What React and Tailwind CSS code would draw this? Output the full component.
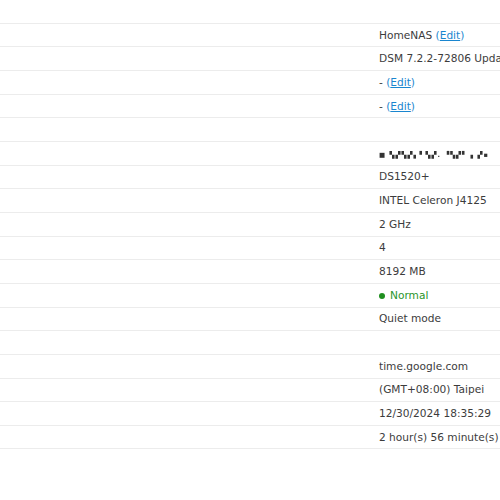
import React from 'react';

const Edit = () => (
  <span className="text-[#1a86cf]">(<span className="underline">Edit</span>)</span>
);

const rows = [
  null,
  <>HomeNAS <Edit /></>,
  'DSM 7.2.2-72806 Update 2',
  <>- <Edit /></>,
  <>- <Edit /></>,
  null,
  <span className="text-[6.5px] font-bold tracking-[1px] text-[#333] blur-[0.5px]">■ ▚▞▚▞▖▘▚▞. ▝▚▞▘▗ ▞▪</span>,
  'DS1520+',
  'INTEL Celeron J4125',
  '2 GHz',
  '4',
  '8192 MB',
  <span className="inline-flex items-center gap-[5px] text-[#2a952a]">
    <span className="w-[6px] h-[6px] rounded-full bg-[#1f8f1f]"></span>
    Normal
  </span>,
  'Quiet mode',
  null,
  'time.google.com',
  '(GMT+08:00) Taipei',
  '12/30/2024 18:35:29',
  '2 hour(s) 56 minute(s) 12 second(s)',
];

export default function App() {
  return (
    <div className="w-[500px] h-[500px] bg-white overflow-hidden text-[10.6px] text-[#3c3c3c]" style={{ fontFamily: '"DejaVu Sans", Verdana, sans-serif' }}>
      {rows.map((content, i) => (
        <div key={i} className="flex h-[23.67px] border-b border-[#ececec] whitespace-nowrap">
          <div className="w-[371px] shrink-0"></div>
          <div className="flex items-center pl-[8px] pt-px">
            <span>{content}</span>
          </div>
        </div>
      ))}
    </div>
  );
}
